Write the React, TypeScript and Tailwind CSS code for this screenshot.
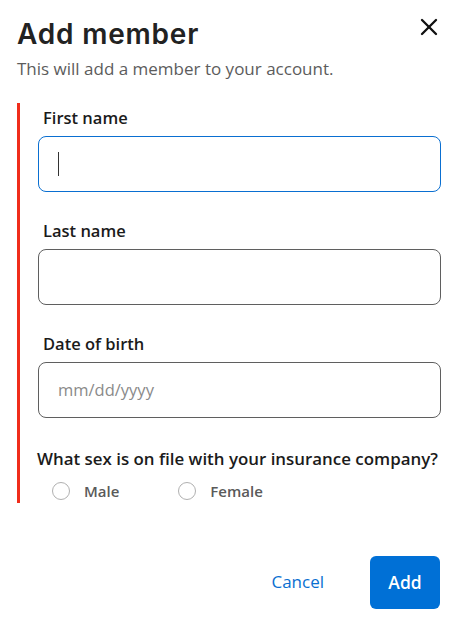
import { X } from "lucide-react"

function Field({ label, placeholder, focused }: { label: string; placeholder?: string; focused?: boolean }) {
  return (
    <div className="flex flex-col">
      <label className="pl-[5px] text-[16.5px] font-semibold text-[#1b1b1b] leading-[20px] mb-[8px]">{label}</label>
      <div
        className={
          focused
            ? "h-[56px] rounded-[8px] border border-[#0a6fd1] flex items-center pl-[19px]"
            : "h-[56px] rounded-[8px] border border-[#5f5f5f] flex items-center pl-[19px]"
        }
      >
        {focused ? <span className="w-px h-[24px] bg-[#333]" /> : null}
        {placeholder ? <span className="text-[16.5px] text-[#8a8a8a]">{placeholder}</span> : null}
      </div>
    </div>
  )
}

function Radio({ label }: { label: string }) {
  return (
    <div className="flex items-center gap-[14px]">
      <span className="w-[18px] h-[18px] rounded-full border border-[#b0b0b0] bg-white" />
      <span className="text-[15px] font-semibold text-[#5a5a5a]">{label}</span>
    </div>
  )
}

export default function App() {
  return (
    <div className="w-[457px] h-[622px] bg-white relative" style={{ fontFamily: '"Open Sans", "Noto Sans", sans-serif' }}>
      <button className="absolute right-[14px] top-[13px] text-[#111]">
        <X size={28} strokeWidth={2} />
      </button>
      <div className="pt-[17px] px-[17px]">
        <h1 className="text-[28px] font-semibold text-[#222] leading-[34px] tracking-[0.8px]" style={{ fontFamily: 'Inter, sans-serif' }}>
          Add member
        </h1>
        <p className="mt-[8px] text-[17px] text-[#5c5c5c] leading-[20px]">This will add a member to your account.</p>
        <div className="mt-[24px] border-l-[3px] border-[#f02d1b] pl-[18px] pt-[5px] pb-0 mr-[-1px]">
          <div className="flex flex-col gap-[29px]">
            <Field label="First name" focused />
            <Field label="Last name" />
            <Field label="Date of birth" placeholder="mm/dd/yyyy" />
          </div>
          <p className="mt-[31px] ml-[-1px] mr-[-20px] whitespace-nowrap text-[16.9px] font-semibold text-[#1b1b1b] leading-[20px]">What sex is on file with your insurance company?</p>
          <div className="mt-[11px] pl-[14px] flex items-center gap-[59px]">
            <Radio label="Male" />
            <Radio label="Female" />
          </div>
        </div>
        <div className="mt-[53px] flex items-center justify-end gap-[46px]">
          <button className="text-[17px] text-[#0a6fd1]">Cancel</button>
          <button className="w-[70px] h-[53px] rounded-[6px] bg-[#0070d6] text-white text-[17.5px] font-semibold">Add</button>
        </div>
      </div>
    </div>
  )
}
